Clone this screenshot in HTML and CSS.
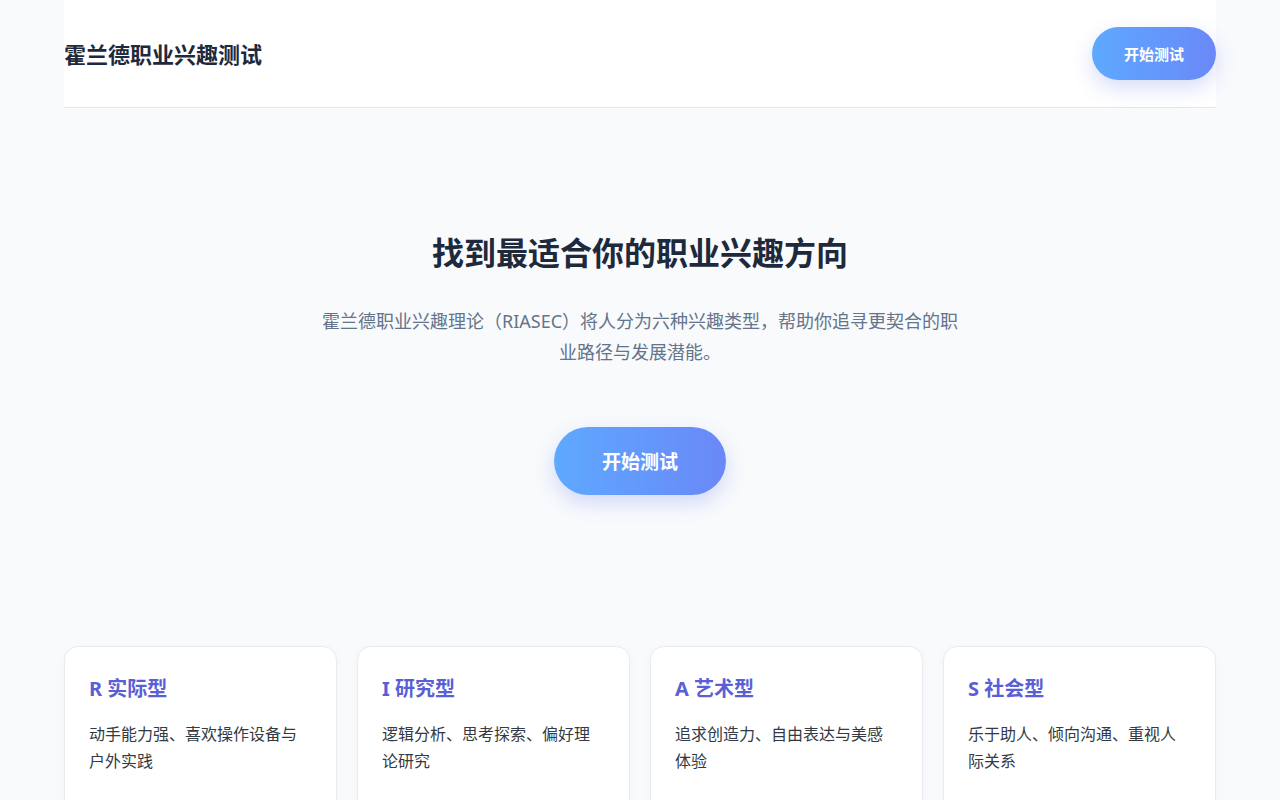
FILE: index.html
```html
<!DOCTYPE html>
<html lang="zh-CN">
<head>
<meta charset="utf-8">
<title>霍兰德职业兴趣测试</title>
<link rel="stylesheet" href="styles.css">
</head>
<body>
<div class="page">
  <header class="header">
    <div class="brand">霍兰德职业兴趣测试</div>
    <button class="btn btn-sm">开始测试</button>
  </header>
  <section class="hero">
    <h1 class="hero-title">找到最适合你的职业兴趣方向</h1>
    <p class="hero-text">霍兰德职业兴趣理论（RIASEC）将人分为六种兴趣类型，帮助你追寻更契合的职业路径与发展潜能。</p>
    <button class="btn btn-lg">开始测试</button>
  </section>
  <section class="cards">
    <div class="card">
      <h3 class="card-title">R 实际型</h3>
      <p class="card-text">动手能力强、喜欢操作设备与户外实践</p>
    </div>
    <div class="card">
      <h3 class="card-title">I 研究型</h3>
      <p class="card-text">逻辑分析、思考探索、偏好理论研究</p>
    </div>
    <div class="card">
      <h3 class="card-title">A 艺术型</h3>
      <p class="card-text">追求创造力、自由表达与美感体验</p>
    </div>
    <div class="card">
      <h3 class="card-title">S 社会型</h3>
      <p class="card-text">乐于助人、倾向沟通、重视人际关系</p>
    </div>
  </section>
</div>
</body>
</html>
```

FILE: styles.css
```css
* { box-sizing: border-box; }
html, body { margin: 0; padding: 0; }
body {
  background: #f8fafc;
  font-family: "Noto Sans", "Noto Sans CJK SC", sans-serif;
  color: #1e293b;
}
.page {
  width: 1152px;
  margin: 0 auto;
}
.header {
  height: 108px;
  background: #ffffff;
  border-bottom: 1px solid #e5e7eb;
  display: flex;
  align-items: center;
  justify-content: space-between;
}
.brand {
  font-size: 22px;
  font-weight: 700;
  color: #1e293b;
  margin-bottom: 2px;
}
.btn {
  border: none;
  color: #ffffff;
  font-family: "Noto Sans", "Noto Sans CJK SC", sans-serif;
  font-weight: 700;
  border-radius: 999px;
  background: linear-gradient(90deg, #5ea9ff 0%, #6a88f7 100%);
  box-shadow: 0 8px 20px rgba(99, 120, 241, 0.25);
  cursor: pointer;
}
.btn-sm {
  width: 124px;
  height: 53px;
  font-size: 15px;
}
.btn-lg {
  width: 172px;
  height: 68px;
  font-size: 19px;
}
.hero {
  display: flex;
  flex-direction: column;
  align-items: center;
  text-align: center;
  padding-top: 123px;
}
.hero-title {
  margin: 0;
  font-size: 32px;
  line-height: 44px;
  font-weight: 700;
  color: #1e293b;
}
.hero-text {
  margin: 31px 0 0;
  width: 650px;
  font-size: 18px;
  line-height: 31px;
  color: #64748b;
}
.hero .btn-lg {
  margin-top: 59px;
}
.cards {
  margin-top: 151px;
  display: grid;
  grid-template-columns: repeat(4, 1fr);
  gap: 20px;
}
.card {
  background: #ffffff;
  border: 1px solid #e8ebf0;
  border-radius: 14px;
  padding: 28px 24px 30px;
  min-height: 180px;
  box-shadow: 0 2px 8px rgba(15, 23, 42, 0.03);
}
.card-title {
  margin: 0;
  font-size: 20px;
  line-height: 28px;
  font-weight: 700;
  color: #5a5fd6;
}
.card-text {
  margin: 18px 0 0;
  font-size: 16px;
  line-height: 27px;
  color: #333a44;
}
```
